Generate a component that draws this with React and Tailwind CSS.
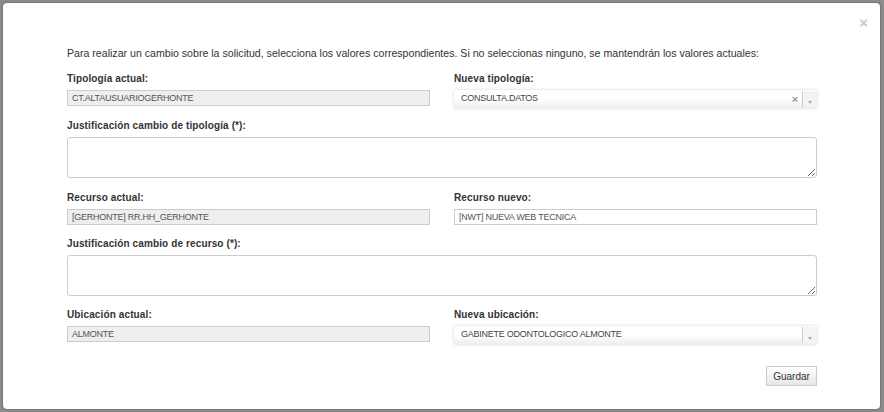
import React from "react";

const font = { fontFamily: '"Liberation Sans", Arial, sans-serif' };

function Label({ children }) {
  return (
    <div className="h-[14px] leading-[14px] text-[10px] font-bold text-[#333] mb-[4px] tracking-[0.12px]">
      {children}
    </div>
  );
}

function ReadOnly({ value }) {
  return (
    <div className="mt-px h-[16px] border border-[#ccc] bg-[#eee] px-[4px] text-[9px] leading-[14px] text-[#555] tracking-[-0.25px]">
      {value}
    </div>
  );
}

function Chosen({ value, clear }) {
  return (
    <div className="relative flex h-[18px] items-stretch bg-gradient-to-b from-white from-50% to-[#eee] shadow-[0_0_3px_rgba(0,0,0,0.18)]">
      <div className="flex-1 px-[7px] text-[9px] leading-[17px] text-[#444] tracking-[-0.25px]">{value}</div>
      {clear && (
        <div className="flex w-[14px] items-center justify-center text-[11px] font-bold text-[#999]">×</div>
      )}
      <div className="my-[1px] w-[15px] border-l border-[#ccc] bg-[#f4f4f4] relative">
        <div className="absolute left-[5px] top-[10px] h-0 w-0 border-l-[2.5px] border-r-[2.5px] border-t-[3px] border-l-transparent border-r-transparent border-t-[#aaa]" />
      </div>
    </div>
  );
}

function TextArea() {
  return (
    <textarea className="block h-[41px] w-full rounded-[3px] border border-[#ccc] bg-white outline-none" />
  );
}

export default function App() {
  return (
    <div className="h-[412px] w-[884px] bg-[#8b8b8b] p-[3px] pr-[4px]" style={font}>
      <div className="relative h-[406px] w-[877px] rounded-[4px] bg-white px-[64px] pt-[43px] shadow-[0_0_2px_rgba(0,0,0,0.5)]">
        <div className="absolute right-[12px] top-[12px] text-[15px] font-bold leading-[15px] text-[#c8c8c8]">×</div>
        <div className="h-[14px] text-[10.6px] leading-[14px] text-[#333] whitespace-nowrap">
          Para realizar un cambio sobre la solicitud, selecciona los valores correspondientes. Si no seleccionas ninguno, se mantendrán los valores actuales:
        </div>

        <div className="mt-[12px] grid grid-cols-2 gap-x-[24px] w-[750px]">
          <div>
            <Label>Tipología actual:</Label>
            <ReadOnly value="CT.ALTAUSUARIOGERHONTE" />
          </div>
          <div>
            <Label>Nueva tipología:</Label>
            <Chosen value="CONSULTA.DATOS" clear />
          </div>
        </div>

        <div className="mt-[11px] w-[750px]">
          <Label>Justificación cambio de tipología (*):</Label>
          <TextArea />
        </div>

        <div className="mt-[13px] grid grid-cols-2 gap-x-[24px] w-[750px]">
          <div>
            <Label>Recurso actual:</Label>
            <ReadOnly value="[GERHONTE] RR.HH_GERHONTE" />
          </div>
          <div>
            <Label>Recurso nuevo:</Label>
            <div className="mt-px h-[16px] border border-[#ccc] bg-white px-[4px] text-[9px] leading-[14px] text-[#555] tracking-[-0.25px]">
              [NWT] NUEVA WEB TECNICA
            </div>
          </div>
        </div>

        <div className="mt-[12px] w-[750px]">
          <Label>Justificación cambio de recurso (*):</Label>
          <TextArea />
        </div>

        <div className="mt-[12px] grid grid-cols-2 gap-x-[24px] w-[750px]">
          <div>
            <Label>Ubicación actual:</Label>
            <ReadOnly value="ALMONTE" />
          </div>
          <div>
            <Label>Nueva ubicación:</Label>
            <Chosen value="GABINETE ODONTOLOGICO ALMONTE" />
          </div>
        </div>

        <div className="mt-[22px] flex w-[750px] justify-end">
          <button className="h-[20px] w-[51px] border border-[#ccc] bg-gradient-to-b from-white to-[#e6e6e6] text-[10px] text-[#333]">
            Guardar
          </button>
        </div>
      </div>
    </div>
  );
}
